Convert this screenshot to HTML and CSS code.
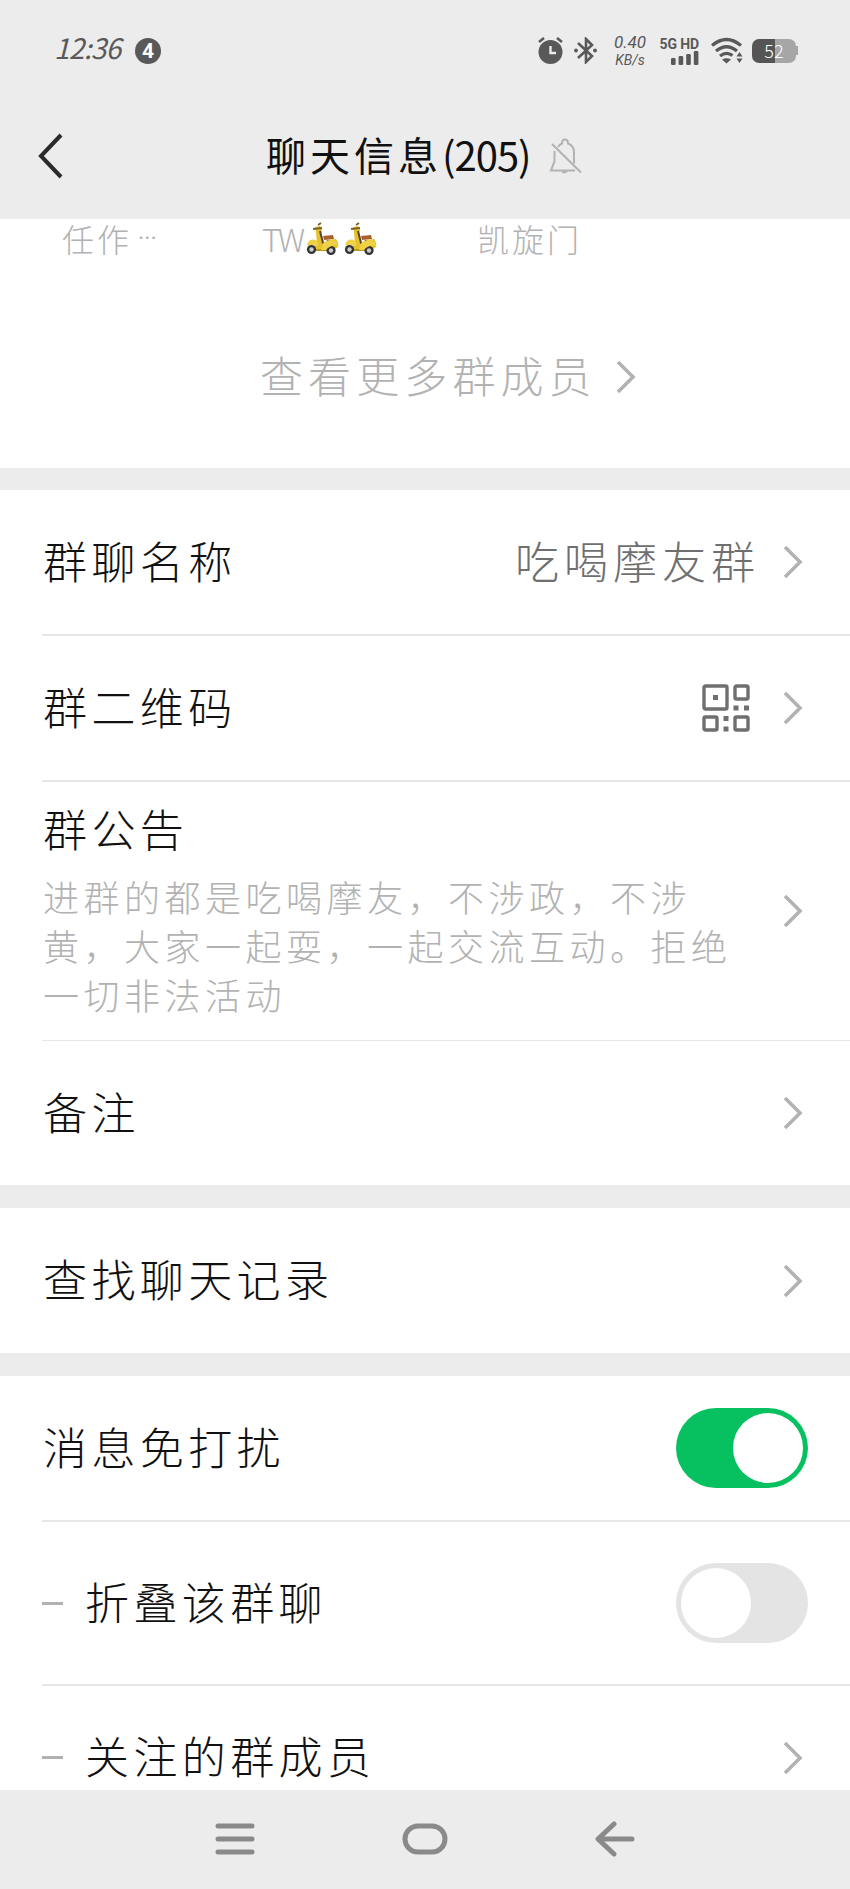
FILE: index.html
```html
<!DOCTYPE html>
<html lang="zh-CN">
<head>
    <meta charset="UTF-8">
    <meta name="viewport" content="width=device-width, initial-scale=1.0">
    <title>聊天信息</title>
    <link rel="stylesheet" href="styles.css">
</head>
<body>
<!-- shared icons -->
<svg class="defs">
    <symbol id="arrow" viewBox="0 0 20 36">
        <path d="M2 3l15 15L2 33" fill="none" stroke="currentColor" stroke-width="3.6"/>
    </symbol>
    <symbol id="scooter" viewBox="0 0 34 34">
        <path d="M18 14l10-1 1 4-10 1z" fill="#a9602c"/>
        <path d="M10 5l5-1 2 3-1 5 2 10h4l1-4 8-1q3 4 2 8l-6 4H10l-1-4 3-3-1-12z" fill="#e6c229"/>
        <path d="M2 23q2-7 9-5l3 4-3 3q-3-4-6-1z" fill="#f0d044"/>
        <path d="M15 9l3 12h4l1-3" fill="none" stroke="#5a4030" stroke-width="2"/>
        <path d="M8 7l9-1M13 3l3-2" stroke="#79622b" stroke-width="2"/>
        <path d="M11 28h14" stroke="#b99a1d" stroke-width="2"/>
        <circle cx="6.5" cy="27.5" r="4.6" fill="#333"/><circle cx="6.5" cy="27.5" r="2.2" fill="#ccc"/>
        <circle cx="26" cy="28.5" r="4.6" fill="#333"/><circle cx="26" cy="28.5" r="2.2" fill="#ccc"/>
        <path d="M18 21q5-5 13-2l2 5q-7-2-12 4h-5z" fill="#f0d044"/>
    </symbol>
</svg>

<div class="header">
    <div class="status-bar">
        <span class="time">12:36</span>
        <span class="notice">4</span>
        <div class="status-icons">
            <svg class="alarm" width="25" height="27" viewBox="0 0 25 27">
                <circle cx="12.5" cy="15" r="12" fill="#595959"/>
                <path d="M1 5l5-4M24 5l-5-4" stroke="#595959" stroke-width="2.6"/>
                <path d="M12.5 9v7H18" fill="none" stroke="#ececec" stroke-width="2.4"/>
            </svg>
            <svg class="bluetooth" width="23" height="27" viewBox="0 0 23 27">
                <path d="M4 6l14 13-6 6V2l6 6L4 21" fill="none" stroke="#595959" stroke-width="2.6"/>
                <circle cx="2" cy="13.5" r="1.9" fill="#595959"/><circle cx="21" cy="13.5" r="1.9" fill="#595959"/>
            </svg>
            <div class="speed"><span>0.40</span><span class="unit">KB/s</span></div>
            <div class="network">
                <span>5G HD</span>
                <svg width="28" height="14" viewBox="0 0 28 14" fill="#595959">
                    <rect x="0" y="7" width="4.6" height="7" rx="1.3"/>
                    <rect x="7.6" y="5" width="4.6" height="9" rx="1.3"/>
                    <rect x="15.2" y="3" width="4.6" height="11" rx="1.3"/>
                    <rect x="22.8" y="0" width="4.6" height="14" rx="1.3"/>
                </svg>
            </div>
            <svg class="wifi" width="32" height="27" viewBox="0 0 32 27">
                <path d="M1 8.5q14.5-12 29 0M5 14q10.5-8.5 21 0M9 19q6.5-5 12.5-.5" fill="none" stroke="#595959" stroke-width="3.3"/>
                <path d="M11 22.5q4.5-2.5 9 0L15.5 26.5zM25.5 19.5l3-4.5 3 4.5zM25.5 21.5l3 4.5 3-4.5z" fill="#595959"/>
            </svg>
            <div class="battery"><span>52</span></div>
        </div>
    </div>
    <div class="title-bar">
        <svg class="back" width="26" height="46" viewBox="0 0 26 46">
            <path d="M23 2L3 23l20 21" fill="none" stroke="#2b2b2b" stroke-width="4"/>
        </svg>
        <h1>聊天信息<span>(205)</span></h1>
        <svg class="bell" width="34" height="36" viewBox="0 0 34 36" fill="none" stroke="#b2b2b2" stroke-width="2">
            <path d="M5.5 13v10L2 32.5h24M9 9q2-3 4-3.5 0-4 3-4t3 4q6 2 6 9v11"/>
            <path d="M13 33q2 3 5 0M3 6l29 28.5"/>
        </svg>
    </div>
</div>

<div class="members">
    <div class="names">
        <div class="name">任作<i>···</i></div>
        <div class="name"><b>TW</b><svg><use href="#scooter"/></svg><svg><use href="#scooter"/></svg></div>
        <div class="name">凯旋门</div>
    </div>
    <div class="more"><span>查看更多群成员</span><svg class="arrow"><use href="#arrow"/></svg></div>
</div>

<div class="group">
    <div class="row">
        <span class="label">群聊名称</span>
        <span class="value">吃喝摩友群</span>
        <svg class="arrow"><use href="#arrow"/></svg>
    </div>
    <div class="row">
        <span class="label">群二维码</span>
        <svg class="qrcode" width="48" height="48" viewBox="0 0 48 48">
            <g fill="none" stroke="#6f6f6f" stroke-width="3.4">
                <rect x="2" y="2" width="23" height="23" rx="1.5"/>
                <rect x="33" y="2" width="13" height="13" rx="1.5"/>
                <rect x="2" y="33" width="13" height="13" rx="1.5"/>
                <rect x="33" y="33" width="13" height="13" rx="1.5"/>
            </g>
            <path d="M11 11h5v5h-5zM31.5 21.5h5v5h-5zM42 21.5h5v5h-5zM21.5 32h5v5h-5zM21.5 42.5h5v5h-5z" fill="#6f6f6f"/>
        </svg>
        <svg class="arrow"><use href="#arrow"/></svg>
    </div>
    <div class="row notice-row">
        <div class="notice-text">
            <div class="label">群公告</div>
            <p>进群的都是吃喝摩友，不涉政，不涉<br>黄，大家一起耍，一起交流互动。拒绝<br>一切非法活动</p>
        </div>
        <svg class="arrow"><use href="#arrow"/></svg>
    </div>
    <div class="row remark">
        <span class="label">备注</span>
        <svg class="arrow"><use href="#arrow"/></svg>
    </div>
</div>

<div class="group">
    <div class="row">
        <span class="label">查找聊天记录</span>
        <svg class="arrow"><use href="#arrow"/></svg>
    </div>
</div>

<div class="group last">
    <div class="row">
        <span class="label">消息免打扰</span>
        <div class="switch on"></div>
    </div>
    <div class="row sub fold">
        <span class="label">折叠该群聊</span>
        <div class="switch"></div>
    </div>
    <div class="row sub follow">
        <span class="label">关注的群成员</span>
        <svg class="arrow"><use href="#arrow"/></svg>
    </div>
</div>

<div class="nav-bar">
    <svg width="40" height="36" viewBox="0 0 40 36"><path d="M3 5h34M3 18h34M3 31h34"/></svg>
    <svg width="46" height="36" viewBox="0 0 46 36"><rect x="3" y="5" width="40" height="26" rx="13"/></svg>
    <svg width="40" height="36" viewBox="0 0 40 36"><path d="M19 3L3 18l16 15M4 18h33"/></svg>
</div>
</body>
</html>
```

FILE: styles.css
```css
* {
    margin: 0;
    padding: 0;
    box-sizing: border-box;
}

body {
    width: 850px;
    height: 1889px;
    overflow: hidden;
    display: flex;
    flex-direction: column;
    background: #ececec;
    color: #111;
    font-family: "Noto Sans CJK SC", sans-serif;
    font-weight: 300;
}

svg {
    display: block;
    flex: none;
}

.defs {
    position: absolute;
    width: 0;
    height: 0;
}

.header {
    flex: none;
    height: 219px;
}

.status-bar {
    display: flex;
    align-items: center;
    height: 101px;
    padding: 0 52px 0 54px;
    color: #595959;
}

.time {
    width: 81px;
    font-size: 28px;
    font-style: italic;
    font-weight: 400;
    line-height: 36px;
    letter-spacing: -.7px;
    padding-bottom: 7px;
}

.notice {
    width: 26px;
    height: 26px;
    border-radius: 50%;
    background: #595959;
    color: #fff;
    font: bold 21px/26px Roboto, sans-serif;
    text-align: center;
}

.status-icons {
    display: flex;
    align-items: center;
    margin-left: auto;
}

.alarm {
    margin-right: 11px;
}

.bluetooth {
    margin-right: 15px;
}

.speed {
    width: 36px;
    margin-right: 12px;
    font: italic 17px/20px Roboto, sans-serif;
    text-align: center;
}

.speed span {
    display: block;
}

.speed .unit {
    font-size: 14px;
    line-height: 17px;
}

.network {
    display: flex;
    flex-direction: column;
    align-items: flex-end;
    width: 39px;
    margin-right: 12px;
    font: bold 14px/14px Roboto, sans-serif;
    white-space: nowrap;
}

.network span {
    letter-spacing: -.1px;
}

.wifi {
    margin-right: 9px;
}

.battery {
    display: flex;
    align-items: center;
    width: 46px;
}

.battery span {
    width: 44px;
    height: 24px;
    border-radius: 7px;
    background: linear-gradient(90deg, #555 52%, #a6a6a6 52%);
    color: #fff;
    font-size: 18px;
    line-height: 22px;
    text-align: center;
}

.battery::after {
    content: "";
    width: 2px;
    height: 9px;
    background: #a6a6a6;
}

.title-bar {
    display: flex;
    align-items: center;
    height: 110px;
    padding-left: 38px;
}

.title-bar h1 {
    width: 264px;
    margin-left: 202px;
    font-size: 40px;
    font-weight: 400;
    line-height: 50px;
    letter-spacing: 4px;
    white-space: nowrap;
    padding-bottom: 5px;
}

.title-bar h1 span {
    letter-spacing: -1px;
}

.bell {
    margin-left: 19px;
}

.members {
    flex: none;
    height: 249px;
    background: #fff;
    color: #b2b2b2;
}

.names {
    display: grid;
    grid-template-columns: 200px 215px 1fr;
    padding-left: 62px;
}

.name {
    display: flex;
    align-items: center;
    height: 38px;
    font-size: 32px;
    line-height: 38px;
    letter-spacing: 3px;
}

.name b {
    width: 43px;
    font-weight: 300;
    letter-spacing: -3px;
}

.name i {
    margin-left: 6px;
    font: 24px/38px Roboto, sans-serif;
    letter-spacing: 0;
}

.name svg {
    width: 34px;
    height: 34px;
    margin: 2px 4px 0 0;
}

.more {
    display: flex;
    align-items: center;
    height: 72px;
    margin-top: 84px;
    padding-left: 260px;
    font-size: 43px;
    letter-spacing: 5.1px;
}

.more span {
    line-height: 60px;
    padding-bottom: 6px;
}

.arrow {
    width: 20px;
    height: 36px;
    margin-left: auto;
    color: #b2b2b2;
}

.more .arrow {
    margin-left: 19px;
}

.group {
    flex: none;
    margin-top: 22px;
    padding-left: 42px;
    background: #fff;
}

.group + .group {
    margin-top: 23px;
}

.row {
    display: flex;
    align-items: center;
    height: 146px;
    padding-right: 47px;
    border-bottom: 2px solid #e7e7e7;
}

.row:last-child {
    height: 145px;
    border-bottom: 0;
}

.row.remark {
    height: 144px;
}

.row.follow {
    height: 143px;
}

.label {
    padding: 0 0 5px 1px;
    font-size: 44px;
    line-height: 60px;
    letter-spacing: 4.4px;
    white-space: nowrap;
}

.value {
    margin-left: auto;
    padding-bottom: 5px;
    color: #6f6f6f;
    font-size: 44px;
    line-height: 60px;
    letter-spacing: 5px;
}

.value + .arrow {
    margin-left: 23px;
}

.qrcode {
    margin-left: auto;
}

.qrcode + .arrow {
    margin-left: 33px;
}

.notice-row {
    height: 259px;
    border-bottom-width: 1px;
}

.notice-text {
    padding-bottom: 5px;
    white-space: nowrap;
}

.notice-row p {
    margin-top: 9px;
    padding-left: 1px;
    color: #b2b2b2;
    font-size: 36px;
    line-height: 49px;
    letter-spacing: 4.5px;
}

.switch {
    width: 132px;
    height: 80px;
    margin-left: auto;
    margin-right: -5px;
    padding: 5px;
    border-radius: 40px;
    background: #e4e4e4;
}

.switch::before {
    content: "";
    display: block;
    width: 70px;
    height: 70px;
    border-radius: 50%;
    background: #fff;
}

.switch.on {
    background: #07c160;
}

.switch.on::before {
    margin-left: auto;
}

.last {
    flex: 1;
    min-height: 0;
    overflow: hidden;
}

.fold {
    height: 164px;
}

.sub::before {
    content: "";
    width: 21px;
    height: 3px;
    margin-right: 21px;
    background: #b2b2b2;
}

.nav-bar {
    flex: none;
    display: flex;
    justify-content: center;
    gap: 147px;
    height: 99px;
    padding-top: 31px;
    background: #ececec;
}

.nav-bar svg {
    fill: none;
    stroke: #8a8a8a;
    stroke-width: 5;
    stroke-linecap: round;
    stroke-linejoin: round;
}
```
